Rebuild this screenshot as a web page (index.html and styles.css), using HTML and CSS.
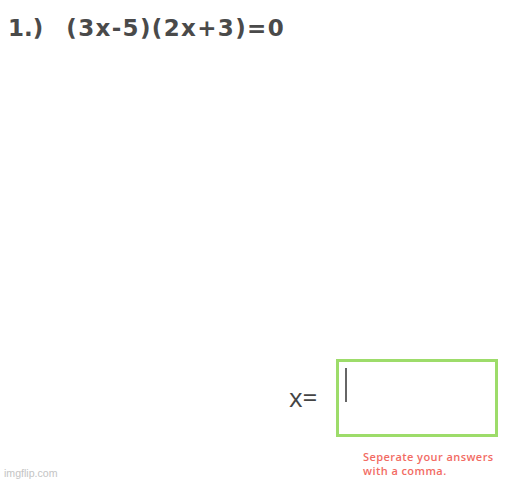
FILE: index.html
```html
<!DOCTYPE html>
<html>
<head>
<meta charset="utf-8">
<link rel="stylesheet" href="styles.css">
</head>
<body>
<div class="page">
  <div class="question">
    <span class="num">1.)</span>
    <span class="eq">(3x-5)(2x+3)=0</span>
  </div>
  <div class="answer">
    <span class="label">x=</span>
    <div class="field">
      <div class="box"><span class="caret"></span></div>
      <p class="hint">Seperate your answers<br>with a comma.</p>
    </div>
  </div>
  <div class="watermark">imgflip.com</div>
</div>
</body>
</html>
```
FILE: styles.css
```css
html, body {
  margin: 0;
  padding: 0;
  background: #fff;
}
.page {
  width: 518px;
  height: 482px;
  position: relative;
  font-family: "Open Sans", "DejaVu Sans", sans-serif;
  color: #444;
  overflow: hidden;
}
.question {
  display: flex;
  gap: 23px;
  padding: 12px 0 0 8px;
  font-family: "DejaVu Sans", sans-serif;
  font-size: 23px;
  font-weight: 700;
  letter-spacing: 1.35px;
  line-height: 32px;
  color: #4a4a4a;
}
.num {
  letter-spacing: 0;
}
.answer {
  display: flex;
  align-items: flex-start;
  margin-top: 315px;
  padding-left: 289px;
}
.label {
  font-size: 26px;
  line-height: 30px;
  margin-top: 23px;
  width: 47px;
  color: #444;
}
.field {
  display: flex;
  flex-direction: column;
}
.box {
  width: 156px;
  height: 72px;
  border: 3px solid #9ddc6a;
  box-sizing: content-box;
  position: relative;
}
.caret {
  position: absolute;
  left: 6px;
  top: 6px;
  width: 2px;
  height: 34px;
  background: #666;
}
.hint {
  margin: 13px 0 0 27px;
  font-size: 11px;
  letter-spacing: 0.43px;
  line-height: 13.5px;
  color: #f26b63;
  font-weight: 600;
}
.watermark {
  position: absolute;
  left: 4px;
  bottom: 3px;
  font-family: "Liberation Sans", sans-serif;
  font-size: 10.6px;
  color: #c4c4c4;
}
```
